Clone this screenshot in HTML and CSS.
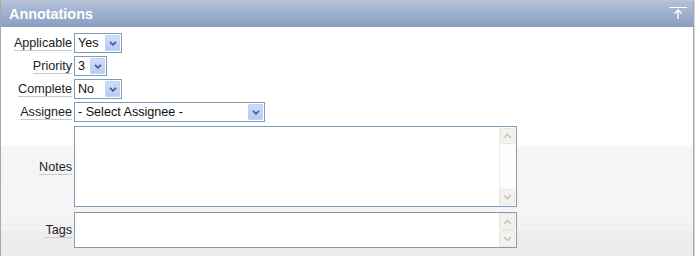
FILE: index.html
```html
<!DOCTYPE html>
<html>
<head>
<meta charset="utf-8">
<link rel="stylesheet" href="styles.css">
</head>
<body>
<div class="region">
  <div class="region-head">
    <span class="title">Annotations</span>
    <span class="top-btn">
      <svg width="18" height="14" viewBox="0 0 18 14"><path d="M0 1.5 H18" stroke="#fff" stroke-width="1"/><path d="M9 4 V13 M5.5 7.5 L9 4 L12.5 7.5" stroke="#fff" stroke-width="1.4" fill="none"/></svg>
    </span>
  </div>
  <div class="region-body">
    <div class="form">
      <div class="lab"><span>Applicable</span></div>
      <div class="fld"><span class="sel w48"><span class="val">Yes</span><span class="dd"><svg width="8" height="5" viewBox="0 0 8 5"><path d="M1 0.8 L4 3.8 L7 0.8" stroke="#4a5e86" stroke-width="1.8" fill="none"/></svg></span></span></div>

      <div class="lab"><span>Priority</span></div>
      <div class="fld"><span class="sel w33"><span class="val">3</span><span class="dd"><svg width="8" height="5" viewBox="0 0 8 5"><path d="M1 0.8 L4 3.8 L7 0.8" stroke="#4a5e86" stroke-width="1.8" fill="none"/></svg></span></span></div>

      <div class="lab"><span>Complete</span></div>
      <div class="fld"><span class="sel w48"><span class="val">No</span><span class="dd"><svg width="8" height="5" viewBox="0 0 8 5"><path d="M1 0.8 L4 3.8 L7 0.8" stroke="#4a5e86" stroke-width="1.8" fill="none"/></svg></span></span></div>

      <div class="lab"><span>Assignee</span></div>
      <div class="fld"><span class="sel w191"><span class="val">- Select Assignee -</span><span class="dd"><svg width="8" height="5" viewBox="0 0 8 5"><path d="M1 0.8 L4 3.8 L7 0.8" stroke="#4a5e86" stroke-width="1.8" fill="none"/></svg></span></span></div>

      <div class="lab gap"><span>Notes</span></div>
      <div class="fld gap"><div class="ta notes"><div class="ta-text"></div><div class="sb"><span class="sbtn"><svg width="9" height="6" viewBox="0 0 9 6"><path d="M1 5 L4.5 1.5 L8 5" stroke="#c6c6be" stroke-width="1.6" fill="none"/></svg></span><span class="sbtn"><svg width="9" height="6" viewBox="0 0 9 6"><path d="M1 1 L4.5 4.5 L8 1" stroke="#c6c6be" stroke-width="1.6" fill="none"/></svg></span></div></div></div>

      <div class="lab gap"><span>Tags</span></div>
      <div class="fld gap"><div class="ta tags"><div class="ta-text"></div><div class="sb"><span class="sbtn"><svg width="9" height="6" viewBox="0 0 9 6"><path d="M1 5 L4.5 1.5 L8 5" stroke="#c6c6be" stroke-width="1.6" fill="none"/></svg></span><span class="sbtn"><svg width="9" height="6" viewBox="0 0 9 6"><path d="M1 1 L4.5 4.5 L8 1" stroke="#c6c6be" stroke-width="1.6" fill="none"/></svg></span></div></div></div>
    </div>
  </div>
</div>
</body>
</html>
```

FILE: styles.css
```css
html, body {
  margin: 0;
  padding: 0;
  background: #fff;
}
body {
  font-family: "Liberation Sans", Arial, sans-serif;
  font-size: 12.6px;
}
.region {
  width: 694px;
  height: 256px;
  box-sizing: border-box;
  border: 1px solid #a9a9a9;
  border-top-color: #c4c4c4;
  box-shadow: 1px 1px 0 #d4d4d4;
  display: flex;
  flex-direction: column;
}
.region-head {
  height: 26px;
  flex: none;
  display: flex;
  align-items: center;
  justify-content: space-between;
  padding: 0 6px 0 8px;
  background: linear-gradient(#b1c0da, #8a9ec1);
}
.title {
  color: #fff;
  font-weight: bold;
  font-size: 14.4px;
}
.top-btn {
  display: flex;
  margin-top: -2px;
}
.region-body {
  flex: 1;
  padding: 6px 0 8px 0;
  background: linear-gradient(to bottom,
    #ffffff 0, #ffffff 118px,
    #fbfbf5 118px, #f7f7f4 120px,
    #f5f5f5 121px, #f4f4f4 197px,
    #f3eef2 198px, #f6f3f5 201px, #efefef 204px,
    #ededed 206px, #ececec 100%);
}
.form {
  display: grid;
  grid-template-columns: 71px auto;
  column-gap: 2px;
  row-gap: 3px;
  justify-content: start;
}
.lab {
  display: flex;
  align-items: center;
  justify-content: flex-end;
  height: 20px;
}
.lab span {
  color: #222;
  line-height: 14px;
  border-bottom: 1px solid #c9c9c9;
  margin-top: 1px;
  white-space: nowrap;
}
.lab.gap {
  height: auto;
  margin-top: 1px;
}
.fld {
  display: flex;
}
.fld.gap {
  margin-top: 1px;
}
.sel {
  height: 20px;
  box-sizing: border-box;
  border: 1px solid #7f9db9;
  background: #fff;
  display: flex;
  align-items: center;
  justify-content: space-between;
  color: #111;
}
.w48 { width: 48px; }
.w33 { width: 33px; }
.w191 { width: 191px; }
.val {
  padding-left: 3px;
  white-space: nowrap;
}
.dd {
  width: 15px;
  height: 16px;
  margin-right: 1px;
  box-sizing: border-box;
  border: 1px solid #c1d2f8;
  border-radius: 1px;
  background: linear-gradient(#cfdcfd, #b7cbf7);
  display: flex;
  align-items: center;
  justify-content: center;
}
.ta {
  width: 443px;
  box-sizing: border-box;
  border: 1px solid #7f9db9;
  background: #fff;
  display: flex;
}
.ta.notes { height: 81px; }
.ta.tags { height: 36px; margin-top: 1px; }
.ta-text { flex: 1; }
.sb {
  width: 17px;
  box-sizing: border-box;
  border-left: 1px solid #eeeee8;
  background: #fdfdfb;
  display: flex;
  flex-direction: column;
  justify-content: space-between;
  padding: 1px 1px 1px 0;
}
.sbtn {
  height: 16px;
  box-sizing: border-box;
  border: 1px solid #e8e8e0;
  border-radius: 2px;
  background: #f3f3ee;
  display: flex;
  align-items: center;
  justify-content: center;
}
.tags .sb { padding: 0 1px 0 0; }
.tags .sbtn { height: 17px; }
```
